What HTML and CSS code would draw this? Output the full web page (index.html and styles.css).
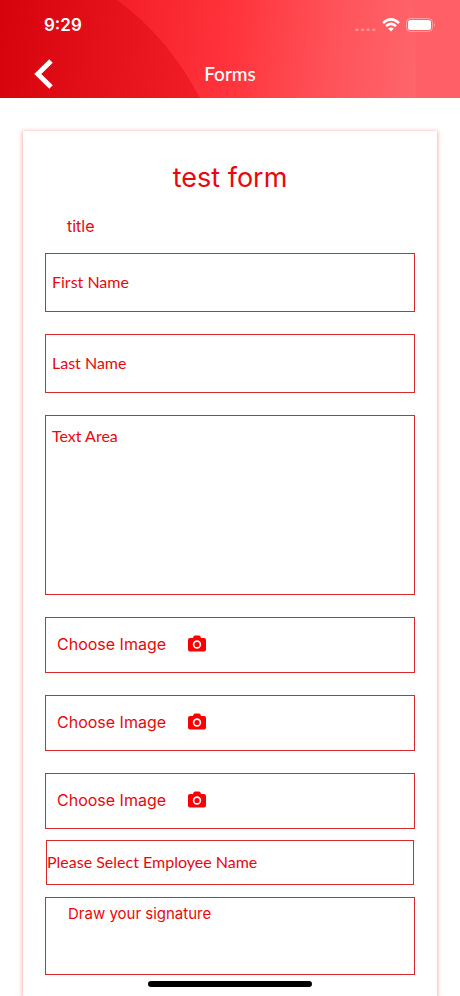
FILE: index.html
```html
<!DOCTYPE html>
<html lang="en">
<head>
  <meta charset="utf-8">
  <meta name="viewport" content="width=device-width, initial-scale=1">
  <title>Forms</title>
  <link rel="stylesheet" href="styles.css">
</head>
<body>
  <header class="top">
    <svg class="top-art" viewBox="0 0 460 98" preserveAspectRatio="none" aria-hidden="true">
      <defs>
        <linearGradient id="base" gradientUnits="userSpaceOnUse" x1="110" y1="0" x2="425" y2="30">
          <stop offset="0" stop-color="#f51c27"/>
          <stop offset="0.4" stop-color="#ff343c"/>
          <stop offset="0.7" stop-color="#ff5158"/>
          <stop offset="1" stop-color="#ff666d"/>
        </linearGradient>
        <linearGradient id="disc" gradientUnits="userSpaceOnUse" x1="0" y1="0" x2="200" y2="20">
          <stop offset="0" stop-color="#d6020c"/>
          <stop offset="1" stop-color="#f01d26"/>
        </linearGradient>
      </defs>
      <rect width="460" height="98" fill="url(#base)"/>
      <path d="M0 0H117Q167 36 200 98H0Z" fill="url(#disc)"/>
      <path d="M412 0Q418 40 416 98H460V0Z" fill="#ff5f67"/>
    </svg>
    <div class="status">
      <time class="clock">9:29</time>
      <div class="indicators">
        <svg class="dots" width="22" height="12" viewBox="0 0 22 12" fill="#fff" fill-opacity=".3" aria-hidden="true">
          <circle cx="3" cy="11" r="1.8"/><circle cx="8.600" cy="11" r="1.8"/><circle cx="14.200" cy="11" r="1.8"/><circle cx="19.800" cy="11" r="1.8"/>
        </svg>
        <svg width="18" height="14" viewBox="0 0 18 14" fill="none" stroke="#fff" stroke-width="2.500" aria-hidden="true">
          <path d="M1 5.200Q9-2.400 17 5.200"/>
          <path d="M4 8.200Q9 3.600 14 8.200"/>
          <path d="M9 13.500 6.200 10.500Q9 8.300 11.800 10.500Z" fill="#fff" stroke="none"/>
        </svg>
        <svg width="30" height="14" viewBox="0 0 30 14" aria-hidden="true">
          <rect x=".5" y=".5" width="26" height="13" rx="4" fill="none" stroke="#fff" stroke-opacity=".4"/>
          <rect x="2" y="2" width="23" height="10" rx="2.500" fill="#fff"/>
          <path d="M28 4.800Q29.800 7 28 9.200Z" fill="#fff" fill-opacity=".5"/>
        </svg>
      </div>
    </div>
    <nav class="bar">
      <button class="back" type="button" aria-label="Back">
        <svg width="20" height="30" viewBox="0 0 20 30" fill="none" stroke="#fff" stroke-width="5" aria-hidden="true">
          <path d="M17 2 3.800 15 17 28"/>
        </svg>
      </button>
      <h1 class="bar-title">Forms</h1>
    </nav>
  </header>

  <main class="page">
    <form class="card">
      <h2 class="form-name">test form</h2>
      <p class="form-title">title</p>
      <div class="fields">
        <input class="field" type="text" placeholder="First Name" aria-label="First Name">
        <input class="field" type="text" placeholder="Last Name" aria-label="Last Name">
        <textarea class="field area" placeholder="Text Area" aria-label="Text Area"></textarea>
        <button class="picker" type="button">Choose Image
          <svg class="camera" viewBox="0 0 20 18" aria-hidden="true"><path fill="#f90005" fill-rule="evenodd" d="M6.500 1.600Q7 .5 8.200.5H11.800Q13 .5 13.500 1.600L14 3H17Q19 3 19 5V14.500Q19 16.500 17 16.500H3Q1 16.500 1 14.500V5Q1 3 3 3H6ZM10 5.300A4.200 4.200 0 1 0 10 13.700 4.200 4.200 0 1 0 10 5.300ZM10 6.900A2.600 2.600 0 1 1 10 12.100 2.600 2.600 0 1 1 10 6.900Z"/></svg>
        </button>
        <button class="picker" type="button">Choose Image
          <svg class="camera" viewBox="0 0 20 18" aria-hidden="true"><path fill="#f90005" fill-rule="evenodd" d="M6.500 1.600Q7 .5 8.200.5H11.800Q13 .5 13.500 1.600L14 3H17Q19 3 19 5V14.500Q19 16.500 17 16.500H3Q1 16.500 1 14.500V5Q1 3 3 3H6ZM10 5.300A4.200 4.200 0 1 0 10 13.700 4.200 4.200 0 1 0 10 5.300ZM10 6.900A2.600 2.600 0 1 1 10 12.100 2.600 2.600 0 1 1 10 6.900Z"/></svg>
        </button>
        <button class="picker" type="button">Choose Image
          <svg class="camera" viewBox="0 0 20 18" aria-hidden="true"><path fill="#f90005" fill-rule="evenodd" d="M6.500 1.600Q7 .5 8.200.5H11.800Q13 .5 13.500 1.600L14 3H17Q19 3 19 5V14.500Q19 16.500 17 16.500H3Q1 16.500 1 14.500V5Q1 3 3 3H6ZM10 5.300A4.200 4.200 0 1 0 10 13.700 4.200 4.200 0 1 0 10 5.300ZM10 6.900A2.600 2.600 0 1 1 10 12.100 2.600 2.600 0 1 1 10 6.900Z"/></svg>
        </button>
      </div>
      <select class="employee" aria-label="Employee">
        <option>Please Select Employee Name</option>
      </select>
      <div class="signature">Draw your signature</div>
    </form>
  </main>
  <div class="home-bar"></div>
</body>
</html>
```
FILE: styles.css
```css
* {
  box-sizing: border-box;
}

body {
  margin: 0;
  min-height: 100vh;
  display: flex;
  flex-direction: column;
  background: #fff;
  color: #e8080e;
  font-family: Inter, "Liberation Sans", sans-serif;
  font-size: 16px;
}

.top {
  position: relative;
  height: 98px;
  color: #fff;
}

.top-art {
  position: absolute;
  inset: 0;
  width: 100%;
  height: 100%;
}

.status,
.bar {
  position: relative;
  display: flex;
  align-items: center;
}

.status {
  height: 50px;
  padding: 0 24px 0 44px;
  justify-content: space-between;
}

.clock {
  font-size: 17px;
  font-weight: 600;
}

.indicators {
  display: flex;
  align-items: center;
  gap: 6px;
}

.bar {
  height: 48px;
  display: grid;
  grid-template-columns: 1fr auto 1fr;
  padding: 0 34px;
}

.back {
  justify-self: start;
  display: flex;
  padding: 0;
  border: 0;
  background: none;
}

.bar-title {
  margin: 0;
  font: 500 19px/24px Lato, sans-serif;
}

.page {
  flex: 1;
  display: flex;
  padding: 33px 23px 0;
  overflow: hidden;
}

.card {
  flex: 1;
  display: flex;
  flex-direction: column;
  min-width: 0;
  padding: 28px 22px 16px;
  box-shadow: 0 1px 4px 1px #ffb3b3;
}

.form-name {
  margin: 0;
  text-align: center;
  font-size: 27px;
  line-height: 38px;
  font-weight: 400;
}

.form-title {
  margin: 18px 22px 16px;
  line-height: 22px;
}

.fields {
  display: grid;
  gap: 22px;
}

.field,
.picker,
.employee,
.signature {
  border: 1px solid #d9292d;
  border-radius: 0;
  background: #fff;
  color: inherit;
}

.field,
.employee {
  font: 400 16px/20px Lato, sans-serif;
}

.field {
  width: 100%;
  height: 59px;
  padding: 0 6px 2px;
}

.field::placeholder {
  color: inherit;
  opacity: 1;
}

.area {
  display: block;
  height: 180px;
  padding: 10px 6px;
  resize: none;
}

.picker {
  display: flex;
  align-items: center;
  gap: 21px;
  height: 56px;
  padding: 0 11px 2px;
  font: inherit;
}

.camera {
  width: 20px;
  height: 18px;
}

.employee {
  appearance: none;
  height: 45px;
  margin: 11px 1px 12px;
  padding: 0 0 2px;
}

.signature {
  height: 78px;
  padding: 5px 22px;
  font-size: 15px;
  line-height: 22px;
}

.home-bar {
  position: fixed;
  bottom: 9px;
  left: 50%;
  width: 164px;
  height: 6px;
  margin-left: -82px;
  border-radius: 3px;
  background: #000;
}
```
